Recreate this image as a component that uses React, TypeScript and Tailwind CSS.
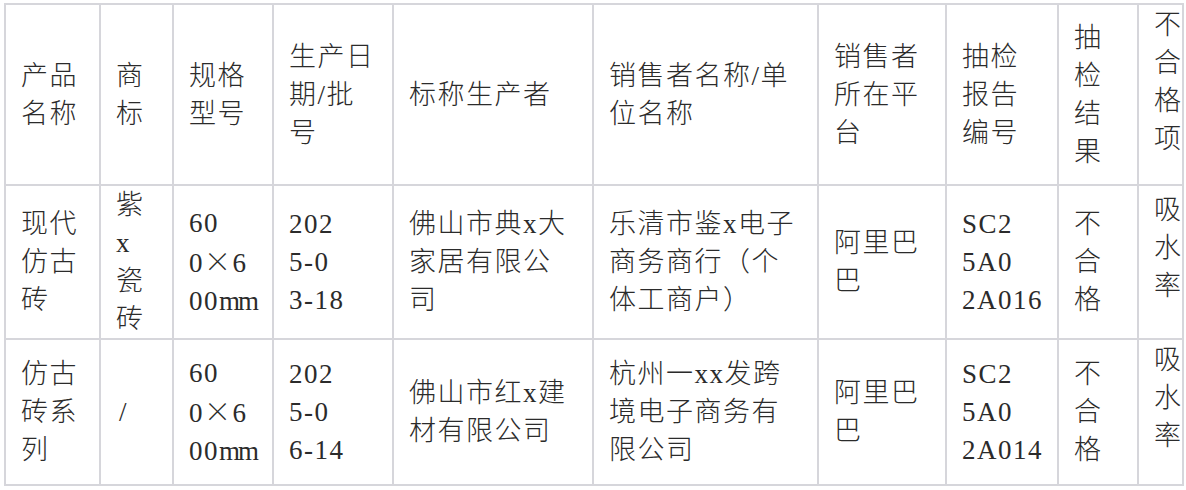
import React from 'react';

const cols = [95, 73, 100, 120, 200, 225, 128, 112, 80, 45];

const cjk = { fontFamily: '"Noto Sans CJK SC", sans-serif' };

function X() {
  return <span style={cjk}>×</span>;
}

function MM() {
  return <span className="tracking-[-2px]">mm</span>;
}

type Cell = React.ReactNode[];

const header: Cell[] = [
  ['产品', '名称'],
  ['商', '标'],
  ['规格', '型号'],
  ['生产日', '期/批', '号'],
  ['标称生产者'],
  ['销售者名称/单', '位名称'],
  ['销售者', '所在平', '台'],
  ['抽检', '报告', '编号'],
  ['抽', '检', '结', '果'],
  ['不', '合', '格', '项'],
];

const rows: Cell[][] = [
  [
    ['现代', '仿古', '砖'],
    ['紫', 'x', '瓷', '砖'],
    ['60', <>0<X />6</>, <>00<MM /></>],
    ['202', '5-0', '3-18'],
    ['佛山市典x大', '家居有限公', '司'],
    ['乐清市鉴x电子', '商务商行（个', '体工商户）'],
    ['阿里巴', '巴'],
    ['SC2', '5A0', '2A016'],
    ['不', '合', '格'],
    ['吸', '水', '率'],
  ],
  [
    ['仿古', '砖系', '列'],
    ['/'],
    ['60', <>0<X />6</>, <>00<MM /></>],
    ['202', '5-0', '6-14'],
    ['佛山市红x建', '材有限公司'],
    ['杭州一xx发跨', '境电子商务有', '限公司'],
    ['阿里巴', '巴'],
    ['SC2', '5A0', '2A014'],
    ['不', '合', '格'],
    ['吸', '水', '率'],
  ],
];

const rowHeights = ['h-[147px]', 'h-[146px]'];

function Lines({ lines }: { lines: React.ReactNode[] }) {
  return (
    <>
      {lines.map((l, i) => (
        <div key={i} className="whitespace-nowrap">
          {l}
        </div>
      ))}
    </>
  );
}

export default function App() {
  return (
    <div
      className="w-[1186px] h-[490px] bg-white overflow-hidden pt-[3px] pl-[4px] text-[#2b2b2b] text-[27px] leading-[38px] tracking-[1.5px] font-light"
      style={{ fontFamily: '"Liberation Serif", "Noto Sans CJK SC", serif' }}
    >
      <table className="border-collapse table-fixed w-[1178px]">
        <colgroup>
          {cols.map((w, i) => (
            <col key={i} style={{ width: w }} />
          ))}
        </colgroup>
        <tbody>
          <tr className="h-[181px]">
            {header.map((c, i) => (
              <td
                key={i}
                className={`border-2 border-[#d6d6db] align-middle pl-[15px] pr-0 overflow-hidden ${
                  i === 9 ? 'pb-[26px]' : ''
                }`}
              >
                <Lines lines={c} />
              </td>
            ))}
          </tr>
          {rows.map((r, ri) => (
            <tr key={ri} className={rowHeights[ri]}>
              {r.map((c, i) => (
                <td
                  key={i}
                  className={`border-2 border-[#d6d6db] align-middle pl-[15px] pr-0 overflow-hidden ${
                    i === 9 ? 'pb-[28px]' : ''
                  } ${i === 1 && ri === 1 ? 'pl-[18px]' : ''}`}
                >
                  <Lines lines={c} />
                </td>
              ))}
            </tr>
          ))}
        </tbody>
      </table>
    </div>
  );
}
